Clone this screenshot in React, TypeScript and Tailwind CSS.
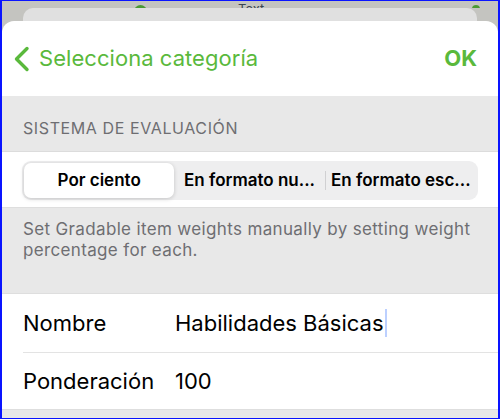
import React from 'react';

const green = 'text-[#5ab93c]';

const segments = ['Por ciento', 'En formato nu...', 'En formato esc...'];

const App: React.FC = () => {
  return (
    <div
      className="w-[500px] h-[419px] overflow-hidden border-l-2 border-r-2 border-t border-b border-[#0a14ff] bg-[#c4c4c0]"
      style={{ fontFamily: 'Inter, "Liberation Sans", sans-serif' }}
    >
      {/* stacked sheet behind */}
      <div className="relative h-[7px] overflow-hidden">
        <div className="absolute left-[132px] top-[4px] w-[13px] h-[13px] rounded-full bg-[#4a9a34]" />
        <div className="absolute left-[236px] top-[1px] text-[13px] leading-[14px] text-[#3a4650]">Text</div>
        <div className="absolute left-[470px] top-[4px] w-[8px] h-[8px] rounded-full bg-[#4a9a34]" />
      </div>
      <div className="mx-[21px] h-[13px] rounded-t-[10px] bg-[#e0e0e0]" />

      {/* front sheet */}
      <div className="rounded-t-[12px] bg-white h-full">
        <div className="h-[75px] flex items-center justify-between pl-[11px] pr-[21px]">
          <div className={`flex items-center gap-[9px] ${green}`}>
            <svg width="17" height="26" viewBox="0 0 17 26" fill="none">
              <path d="M14 2.5 L3.5 13 L14 23.5" stroke="currentColor" strokeWidth="3.4" strokeLinecap="round" strokeLinejoin="round" />
            </svg>
            <span className="text-[22px] tracking-[0.05px]">Selecciona categoría</span>
          </div>
          <span className={`text-[22px] font-bold ${green}`}>OK</span>
        </div>

        <div className="bg-[#e8e8e8] h-[56px] flex items-end px-[21px] pb-[13px] border-b border-[#dcdcdc]">
          <span className="text-[16px] leading-[20px] text-[#6e6e72] tracking-[0.6px]">SISTEMA DE EVALUACIÓN</span>
        </div>

        <div className="h-[56px] pt-[9px] px-[20px] border-b border-[#dedede]">
          <div className="h-[39px] rounded-[9px] bg-[#eeeeef] p-[2px] flex items-stretch">
            {segments.map((s, i) => (
              <React.Fragment key={i}>
                {i === 2 && <div className="w-px my-[8px] bg-[#d0d0d2]" />}
                <div
                  className={`flex-1 flex items-center justify-center text-[17px] font-semibold text-black rounded-[7px] whitespace-nowrap ${
                    i === 0 ? 'bg-white shadow-[0_1px_4px_rgba(0,0,0,0.18)]' : ''
                  }`}
                >
                  {s}
                </div>
              </React.Fragment>
            ))}
          </div>
        </div>

        <div className="bg-[#e8e8e8] h-[86px] pl-[21px] pr-[16px] pt-[11px] border-b border-[#dedede]">
          <p className="text-[17px] leading-[21px] text-[#6e6e72] tracking-[0.35px]">
            Set Gradable item weights manually by setting weight percentage for each.
          </p>
        </div>

        <div className="bg-white">
          <div className="h-[58px] flex items-center pl-[21px] text-[22px] text-black">
            <span className="w-[152px]">Nombre</span>
            <span>Habilidades Básicas</span>
            <span className="ml-px w-[2px] h-[28px] bg-[#bcd0ff]" />
          </div>
          <div className="ml-[21px] h-px bg-[#e3e3e3]" />
          <div className="h-[56px] flex items-center pl-[21px] text-[22px] text-black">
            <span className="w-[152px]">Ponderación</span>
            <span>100</span>
          </div>
        </div>
        <div className="bg-[#e8e8e8] h-[20px] border-t border-[#dedede]" />
      </div>
    </div>
  );
};

export default App;
